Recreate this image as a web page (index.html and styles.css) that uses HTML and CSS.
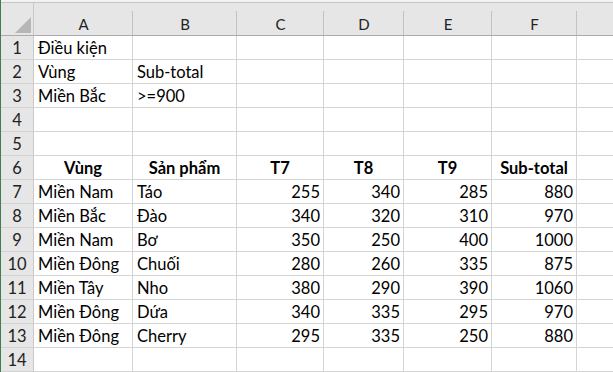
FILE: index.html
```html
<!DOCTYPE html>
<html lang="vi">
<head>
<meta charset="utf-8">
<title>Sheet</title>
<link rel="stylesheet" href="styles.css">
</head>
<body>
<div class="window">
  <div class="topstrip"></div>
  <div class="sheet">
    <div class="corner"><div class="tri"></div></div>
    <div class="colh">A</div><div class="colh">B</div><div class="colh">C</div><div class="colh">D</div><div class="colh">E</div><div class="colh">F</div><div class="colh"></div>

    <div class="rowh">1</div><div class="c">Điều kiện</div><div class="c"></div><div class="c"></div><div class="c"></div><div class="c"></div><div class="c"></div><div class="c"></div>
    <div class="rowh">2</div><div class="c">Vùng</div><div class="c">Sub-total</div><div class="c"></div><div class="c"></div><div class="c"></div><div class="c"></div><div class="c"></div>
    <div class="rowh">3</div><div class="c">Miền Bắc</div><div class="c">&gt;=900</div><div class="c"></div><div class="c"></div><div class="c"></div><div class="c"></div><div class="c"></div>
    <div class="rowh">4</div><div class="c"></div><div class="c"></div><div class="c"></div><div class="c"></div><div class="c"></div><div class="c"></div><div class="c"></div>
    <div class="rowh">5</div><div class="c"></div><div class="c"></div><div class="c"></div><div class="c"></div><div class="c"></div><div class="c"></div><div class="c"></div>
    <div class="rowh">6</div><div class="c hd">Vùng</div><div class="c hd">Sản phẩm</div><div class="c hd">T7</div><div class="c hd">T8</div><div class="c hd">T9</div><div class="c hd">Sub-total</div><div class="c"></div>
    <div class="rowh">7</div><div class="c">Miền Nam</div><div class="c">Táo</div><div class="c n">255</div><div class="c n">340</div><div class="c n">285</div><div class="c n">880</div><div class="c"></div>
    <div class="rowh">8</div><div class="c">Miền Bắc</div><div class="c">Đào</div><div class="c n">340</div><div class="c n">320</div><div class="c n">310</div><div class="c n">970</div><div class="c"></div>
    <div class="rowh">9</div><div class="c">Miền Nam</div><div class="c">Bơ</div><div class="c n">350</div><div class="c n">250</div><div class="c n">400</div><div class="c n">1000</div><div class="c"></div>
    <div class="rowh">10</div><div class="c">Miền Đông</div><div class="c">Chuối</div><div class="c n">280</div><div class="c n">260</div><div class="c n">335</div><div class="c n">875</div><div class="c"></div>
    <div class="rowh">11</div><div class="c">Miền Tây</div><div class="c">Nho</div><div class="c n">380</div><div class="c n">290</div><div class="c n">390</div><div class="c n">1060</div><div class="c"></div>
    <div class="rowh">12</div><div class="c">Miền Đông</div><div class="c">Dứa</div><div class="c n">340</div><div class="c n">335</div><div class="c n">295</div><div class="c n">970</div><div class="c"></div>
    <div class="rowh">13</div><div class="c">Miền Đông</div><div class="c">Cherry</div><div class="c n">295</div><div class="c n">335</div><div class="c n">250</div><div class="c n">880</div><div class="c"></div>
    <div class="rowh">14</div><div class="c"></div><div class="c"></div><div class="c"></div><div class="c"></div><div class="c"></div><div class="c"></div><div class="c"></div>
  </div>
</div>
</body>
</html>
```

FILE: styles.css
```css
html, body {
  margin: 0;
  padding: 0;
  background: #ffffff;
}
body {
  width: 613px;
  height: 372px;
  overflow: hidden;
  font-family: Lato, "Liberation Sans", sans-serif;
  font-size: 16.5px;
  color: #000;
}
.window {
  width: 613px;
  height: 372px;
  overflow: hidden;
  border-left: 1px solid #3f7d55;
  box-sizing: border-box;
}
.topstrip {
  height: 2px;
  background: #f2f2f2;
  border-bottom: 1px solid #c4c4c4;
}
.sheet {
  display: grid;
  grid-template-columns: 33px 99px 104px 87px 80px 88px 85px 78px;
  grid-template-rows: 33px repeat(14, 24px);
}
.corner {
  background: #e6e6e6;
  border-right: 1px solid #c9c9c9;
  border-bottom: 1px solid #ababab;
  box-sizing: border-box;
  display: flex;
  justify-content: flex-end;
  align-items: flex-end;
  padding: 0 2px 2px 0;
}
.tri {
  width: 16px;
  height: 16px;
  background: #b6b6b6;
  clip-path: polygon(100% 0, 100% 100%, 0 100%);
}
.colh {
  background: #e6e6e6 linear-gradient(#c2c2c2, #c2c2c2) no-repeat right bottom / 1px 24px;
  border-bottom: 1px solid #ababab;
  box-sizing: border-box;
  text-align: center;
  font-size: 15px;
  line-height: 22px;
  padding-top: 10px;
  color: #222;
  white-space: nowrap;
}
.rowh {
  background: #e6e6e6;
  border-right: 1px solid #c9c9c9;
  border-bottom: 1px solid #d2d2d2;
  box-sizing: border-box;
  text-align: center;
  font-size: 16.5px;
  line-height: 23px;
  padding-top: 1px;
  color: #222;
}
.c {
  border-right: 1px solid #d4d4d4;
  border-bottom: 1px solid #d4d4d4;
  box-sizing: border-box;
  line-height: 22px;
  padding: 1px 4px 0 4px;
  white-space: nowrap;
  overflow: visible;
}
.n {
  text-align: right;
  padding-right: 3px;
}
.hd {
  font-weight: bold;
  text-align: center;
}
```
